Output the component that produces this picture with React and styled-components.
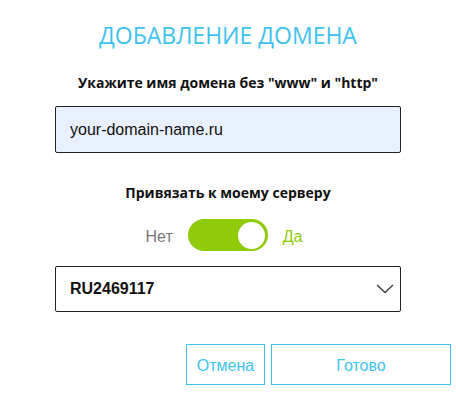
import React, { useState } from 'react'
import styled, { createGlobalStyle } from 'styled-components'

const GlobalStyle = createGlobalStyle`
  body {
    margin: 0;
    background: #fff;
    font-family: "Liberation Sans", Arial, sans-serif;
  }
`

const Dialog = styled.div`
  width: 456px;
  height: 394px;
  display: flex;
  flex-direction: column;
  align-items: center;
  padding-top: 20px;
  box-sizing: border-box;
`

const Title = styled.h1`
  margin: 0;
  font-family: "Open Sans", sans-serif;
  font-weight: 400;
  font-size: 23px;
  line-height: 30px;
  color: #3ec3ef;
`

const Label = styled.div`
  margin-top: ${p => p.$top}px;
  font-family: "Open Sans", sans-serif;
  font-weight: 700;
  font-size: 14px;
  line-height: 20px;
  color: #111;
`

const Field = styled.div`
  margin-top: ${p => p.$top}px;
  width: 346px;
  height: ${p => p.$h}px;
  box-sizing: border-box;
  border: 1px solid #222;
  border-radius: 2px;
  background: ${p => p.$bg || '#fff'};
  display: flex;
  align-items: center;
  justify-content: space-between;
  padding: 0 6px 0 14px;
  font-size: 16px;
  font-weight: ${p => (p.$strong ? 700 : 400)};
  color: #111;
`

const ToggleRow = styled.div`
  margin-top: 16px;
  margin-right: 8px;
  display: flex;
  align-items: center;
  gap: 15px;
  height: 32px;
`

const ToggleText = styled.span`
  font-size: 16px;
  color: ${p => p.$color};
  margin-top: 4px;
`

const Track = styled.button`
  width: 80px;
  height: 32px;
  border: none;
  border-radius: 16px;
  background: #8fcb0a;
  padding: 0 3px;
  display: flex;
  align-items: center;
  justify-content: ${p => (p.$on ? 'flex-end' : 'flex-start')};
  cursor: pointer;
`

const Knob = styled.span`
  width: 27px;
  height: 27px;
  border-radius: 50%;
  background: #fff;
`

const Buttons = styled.div`
  margin-top: 32px;
  align-self: stretch;
  display: flex;
  justify-content: flex-end;
  gap: 6px;
  padding-right: 5px;
`

const Btn = styled.button`
  width: ${p => p.$w}px;
  height: 41px;
  background: #fff;
  border: 1px solid #3ec3ef;
  color: #3ec3ef;
  font-family: "Liberation Sans", Arial, sans-serif;
  font-size: 16px;
  padding: 2px 0 0;
  cursor: pointer;
`

export default function App() {
  const [on, setOn] = useState(true)
  return (
    <>
      <GlobalStyle />
      <Dialog>
        <Title>ДОБАВЛЕНИЕ ДОМЕНА</Title>
        <Label $top={23}>Укажите имя домена без "www" и "http"</Label>
        <Field $top={13} $h={47} $bg="#e8f0fd">your-domain-name.ru</Field>
        <Label $top={30}>Привязать к моему серверу</Label>
        <ToggleRow>
          <ToggleText $color="#777">Нет</ToggleText>
          <Track $on={on} onClick={() => setOn(!on)}>
            <Knob />
          </Track>
          <ToggleText $color="#8fcb0a">Да</ToggleText>
        </ToggleRow>
        <Field $top={15} $h={46} $strong>
          RU2469117
          <svg width="18" height="10" viewBox="0 0 18 10">
            <path d="M1 1 L9 8.5 L17 1" fill="none" stroke="#444" strokeWidth="1.5" />
          </svg>
        </Field>
        <Buttons>
          <Btn $w={79}>Отмена</Btn>
          <Btn $w={180}>Готово</Btn>
        </Buttons>
      </Dialog>
    </>
  )
}
